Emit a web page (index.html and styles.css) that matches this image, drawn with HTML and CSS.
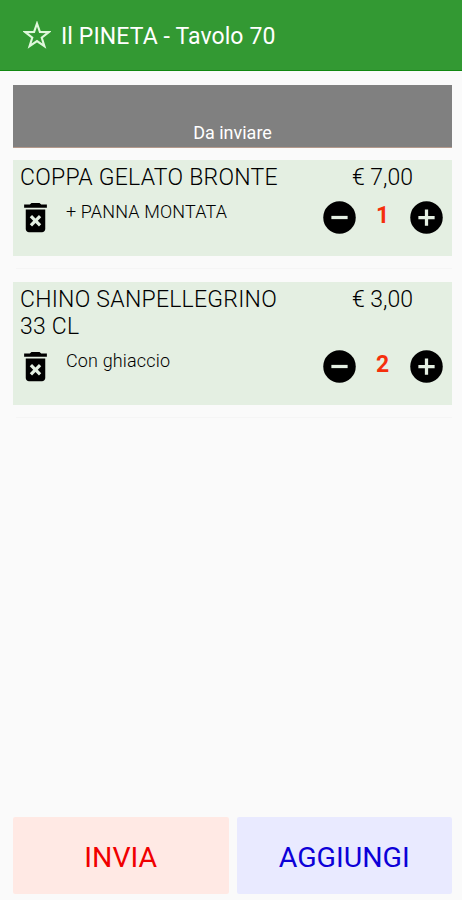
FILE: index.html
```
<!DOCTYPE html>
<html lang="it">
<head>
    <meta charset="UTF-8">
    <meta name="viewport" content="width=device-width, initial-scale=1.0">
    <title>Il PINETA - Tavolo 70</title>
    <link rel="stylesheet" href="styles.css">
</head>
<body>
    <svg class="sprite">
        <symbol id="icon-delete" viewBox="0 0 24 24">
            <path d="M6 19c0 1.100.9 2 2 2h8c1.100 0 2-.9 2-2V7H6v12zm2.460-7.120l1.410-1.410L12 12.590l2.120-2.120 1.410 1.410L13.410 14l2.120 2.120-1.410 1.410L12 15.410l-2.120 2.120-1.410-1.410L10.590 14l-2.130-2.120zM15.500 4l-1-1h-5l-1 1H5v2h14V4z"/>
        </symbol>
        <symbol id="icon-minus" viewBox="0 0 24 24">
            <circle cx="12" cy="12" r="10"/>
            <path class="sign" d="M7 12h10"/>
        </symbol>
        <symbol id="icon-plus" viewBox="0 0 24 24">
            <circle cx="12" cy="12" r="10"/>
            <path class="sign" d="M7 12h10M12 7v10"/>
        </symbol>
    </svg>

    <header class="topbar">
        <svg class="star" viewBox="0 0 28 28">
            <path d="M14 2.500l2.900 8.400 9 .2-7.200 5.500 2.700 8.600L14 20.100l-7.400 5.100 2.700-8.600-7.200-5.500 9-.2z"/>
        </svg>
        <h1>Il PINETA - Tavolo 70</h1>
    </header>

    <main class="order">
        <div class="status">Da inviare</div>

        <section class="item">
            <div class="item-head">
                <h2>COPPA GELATO BRONTE</h2>
                <span class="price">€ 7,00</span>
            </div>
            <div class="item-body">
                <button class="icon-button"><svg><use href="#icon-delete"/></svg></button>
                <p class="note">+ PANNA MONTATA</p>
                <button class="icon-button"><svg><use href="#icon-minus"/></svg></button>
                <span class="quantity">1</span>
                <button class="icon-button"><svg><use href="#icon-plus"/></svg></button>
            </div>
        </section>
        <div class="divider"></div>

        <section class="item">
            <div class="item-head">
                <h2>CHINO SANPELLEGRINO 33 CL</h2>
                <span class="price">€ 3,00</span>
            </div>
            <div class="item-body">
                <button class="icon-button"><svg><use href="#icon-delete"/></svg></button>
                <p class="note">Con ghiaccio</p>
                <button class="icon-button"><svg><use href="#icon-minus"/></svg></button>
                <span class="quantity">2</span>
                <button class="icon-button"><svg><use href="#icon-plus"/></svg></button>
            </div>
        </section>
        <div class="divider"></div>
    </main>

    <footer class="actions">
        <button class="action send">INVIA</button>
        <button class="action add">AGGIUNGI</button>
    </footer>
</body>
</html>
```
FILE: styles.css
```
* {
    box-sizing: border-box;
}
body {
    display: flex;
    flex-direction: column;
    height: 100vh;
    margin: 0;
    background-color: #fafafa;
    color: #000;
    font-family: Roboto, sans-serif;
}
h1, h2, p {
    margin: 0;
}
button {
    padding: 0;
    border: none;
    background: none;
    font-family: inherit;
    cursor: pointer;
}
.sprite {
    display: none;
}
.topbar {
    display: flex;
    align-items: center;
    height: 71px;
    padding-left: 23px;
    background-color: #339933;
    border-bottom: 1px solid #118811;
    color: #fff;
}
.topbar h1 {
    margin-left: 10px;
    padding-top: 2px;
    font-size: 23px;
    font-weight: 400;
    letter-spacing: 0.1px;
}
.star {
    width: 28px;
    height: 28px;
    fill: none;
    stroke: #e0f8dc;
    stroke-width: 2.1;
}
.order {
    flex: 1;
    padding: 14px 10px 0 13px;
}
.status {
    display: flex;
    align-items: flex-end;
    justify-content: center;
    height: 63px;
    margin-bottom: 12px;
    padding-bottom: 4px;
    background-color: #808080;
    border-bottom: 1px solid #b59a8c;
    color: #fff;
    font-size: 18px;
    line-height: 21px;
}
.item {
    padding: 4px 6px 18px 7px;
    background-color: #e4efe2;
}
.divider {
    height: 1px;
    margin: 12px 0 13px 3px;
    background-color: #f5f5f5;
}
.item-head {
    display: flex;
    justify-content: space-between;
    font-size: 23px;
    line-height: 27px;
}
.item-head h2 {
    width: 280px;
    font-size: inherit;
    font-weight: 300;
    letter-spacing: 0.25px;
}
.price {
    width: 94px;
    font-weight: 300;
}
.item-body {
    display: flex;
    align-items: center;
    height: 47px;
    padding-top: 6px;
}
.icon-button {
    width: 39px;
    height: 39px;
    margin-left: -4px;
}
.icon-button svg {
    display: block;
    width: 39px;
    height: 39px;
}
.sign {
    stroke: #e4efe2;
    stroke-width: 2;
}
.note {
    flex: 1;
    align-self: flex-start;
    margin-left: 11px;
    padding-top: 4px;
    font-size: 18px;
    font-weight: 300;
    letter-spacing: 0.15px;
    line-height: 21px;
}
.quantity {
    width: 51px;
    padding: 0 4px 4px 0;
    color: #f52f0c;
    font-size: 23px;
    font-weight: 700;
    text-align: center;
}
.quantity + .icon-button {
    margin-left: -3px;
}
.actions {
    display: flex;
    gap: 8px;
    padding: 0 10px 6px 13px;
}
.action {
    flex: 1;
    height: 77px;
    padding-top: 3px;
    border-radius: 2px;
    font-size: 28.5px;
}
.send {
    background-color: #ffe9e4;
    color: #f00000;
}
.add {
    background-color: #e9eaff;
    color: #0d00d8;
}
```
